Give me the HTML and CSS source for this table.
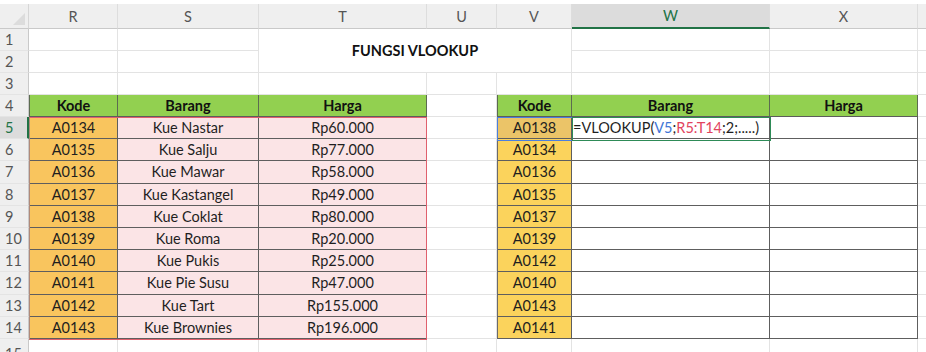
FILE: index.html
```html
<!DOCTYPE html>
<html lang="id">
<head>
<meta charset="utf-8">
<title>Fungsi VLOOKUP</title>
<link rel="stylesheet" href="styles.css">
</head>
<body>
<div class="sheet">
  <div class="grid">
    <!-- column headers -->
    <div class="corner"><span class="tri"></span></div>
    <div class="hc">R</div>
    <div class="hc">S</div>
    <div class="hc">T</div>
    <div class="hc">U</div>
    <div class="hc">V</div>
    <div class="hc active-col">W</div>
    <div class="hc">X</div>
    <div class="hc end"></div>

    <!-- row 1 -->
    <div class="rh">1</div>
    <div class="c"></div>
    <div class="c"></div>
    <div class="title">FUNGSI VLOOKUP</div>
    <div class="c"></div>
    <div class="c"></div>
    <div class="c end"></div>

    <!-- row 2 -->
    <div class="rh">2</div>
    <div class="c"></div>
    <div class="c"></div>
    <div class="c"></div>
    <div class="c"></div>
    <div class="c end"></div>

    <!-- row 3 -->
    <div class="rh">3</div>
    <div class="c"></div>
    <div class="c"></div>
    <div class="c"></div>
    <div class="c"></div>
    <div class="c"></div>
    <div class="c"></div>
    <div class="c"></div>
    <div class="c end"></div>

    <!-- row 4 -->
    <div class="rh">4</div>
    <div class="g first">Kode</div>
    <div class="g">Barang</div>
    <div class="g">Harga</div>
    <div class="c"></div>
    <div class="g first">Kode</div>
    <div class="g">Barang</div>
    <div class="g">Harga</div>
    <div class="c end"></div>

    <!-- row 5 -->
    <div class="rh active-row">5</div>
    <div class="o first">A0134</div>
    <div class="p">Kue Nastar</div>
    <div class="p">Rp60.000</div>
    <div class="c"></div>
    <div class="y first sel">A0138</div>
    <div class="w formula">=VLOOKUP(<span class="ref-b">V5</span>;<span class="ref-r">R5:T14</span>;2;.....)</div>
    <div class="w"></div>
    <div class="c end"></div>

    <!-- row 6 -->
    <div class="rh">6</div>
    <div class="o first">A0135</div>
    <div class="p">Kue Salju</div>
    <div class="p">Rp77.000</div>
    <div class="c"></div>
    <div class="y first">A0134</div>
    <div class="w"></div>
    <div class="w"></div>
    <div class="c end"></div>

    <!-- row 7 -->
    <div class="rh">7</div>
    <div class="o first">A0136</div>
    <div class="p">Kue Mawar</div>
    <div class="p">Rp58.000</div>
    <div class="c"></div>
    <div class="y first">A0136</div>
    <div class="w"></div>
    <div class="w"></div>
    <div class="c end"></div>

    <!-- row 8 -->
    <div class="rh">8</div>
    <div class="o first">A0137</div>
    <div class="p">Kue Kastangel</div>
    <div class="p">Rp49.000</div>
    <div class="c"></div>
    <div class="y first">A0135</div>
    <div class="w"></div>
    <div class="w"></div>
    <div class="c end"></div>

    <!-- row 9 -->
    <div class="rh">9</div>
    <div class="o first">A0138</div>
    <div class="p">Kue Coklat</div>
    <div class="p">Rp80.000</div>
    <div class="c"></div>
    <div class="y first">A0137</div>
    <div class="w"></div>
    <div class="w"></div>
    <div class="c end"></div>

    <!-- row 10 -->
    <div class="rh">10</div>
    <div class="o first">A0139</div>
    <div class="p">Kue Roma</div>
    <div class="p">Rp20.000</div>
    <div class="c"></div>
    <div class="y first">A0139</div>
    <div class="w"></div>
    <div class="w"></div>
    <div class="c end"></div>

    <!-- row 11 -->
    <div class="rh">11</div>
    <div class="o first">A0140</div>
    <div class="p">Kue Pukis</div>
    <div class="p">Rp25.000</div>
    <div class="c"></div>
    <div class="y first">A0142</div>
    <div class="w"></div>
    <div class="w"></div>
    <div class="c end"></div>

    <!-- row 12 -->
    <div class="rh">12</div>
    <div class="o first">A0141</div>
    <div class="p">Kue Pie Susu</div>
    <div class="p">Rp47.000</div>
    <div class="c"></div>
    <div class="y first">A0140</div>
    <div class="w"></div>
    <div class="w"></div>
    <div class="c end"></div>

    <!-- row 13 -->
    <div class="rh">13</div>
    <div class="o first">A0142</div>
    <div class="p">Kue Tart</div>
    <div class="p">Rp155.000</div>
    <div class="c"></div>
    <div class="y first">A0143</div>
    <div class="w"></div>
    <div class="w"></div>
    <div class="c end"></div>

    <!-- row 14 -->
    <div class="rh">14</div>
    <div class="o first">A0143</div>
    <div class="p">Kue Brownies</div>
    <div class="p">Rp196.000</div>
    <div class="c"></div>
    <div class="y first">A0141</div>
    <div class="w"></div>
    <div class="w"></div>
    <div class="c end"></div>

    <!-- row 15 -->
    <div class="rh">15</div>
    <div class="c"></div>
    <div class="c"></div>
    <div class="c"></div>
    <div class="c"></div>
    <div class="c"></div>
    <div class="c"></div>
    <div class="c"></div>
    <div class="c end"></div>
  </div>

  <div class="range-red"></div>
  <div class="range-blue"></div>
  <div class="active-cell"></div>
</div>
</body>
</html>
```

FILE: styles.css
```css
* { box-sizing: border-box; }

html, body {
  margin: 0;
  padding: 0;
  background: #ffffff;
}

body {
  font-family: "Lato", "Liberation Sans", sans-serif;
  font-size: 14.5px;
  color: #1f1f1f;
  width: 926px;
  height: 352px;
  overflow: hidden;
}

.sheet {
  position: relative;
  padding-top: 4px;
  width: 926px;
  height: 352px;
}

.grid {
  display: grid;
  grid-template-columns: 29px 89px 141px 168px 70px 75px 198px 148px 8px;
  grid-template-rows: 25px repeat(4, 22px) repeat(10, 22.2px) 30px;
}

.grid > div {
  display: flex;
  align-items: center;
  justify-content: center;
  white-space: nowrap;
  overflow: hidden;
}

.corner {
  background: #efefef;
  border-right: 1px solid #d6d6d6;
  border-bottom: 1px solid #c9c9c9;
  position: relative;
}
.tri {
  position: absolute;
  right: 3px;
  bottom: 3px;
  width: 0;
  height: 0;
  border-left: 12px solid transparent;
  border-bottom: 12px solid #dcdcdc;
}

.hc {
  background: #efefef;
  color: #555555;
  border-right: 1px solid #dddddd;
  border-bottom: 1px solid #c9c9c9;
  font-size: 14.5px;
}
.hc.active-col {
  background: #dcdcdc;
  color: #217346;
  border-bottom: 2px solid #217346;
}
.hc.end {
  border-right: none;
}

.rh {
  background: #efefef;
  color: #555555;
  border-right: 1px solid #c9c9c9;
  border-bottom: 1px solid #e4e4e4;
  justify-content: flex-start !important;
  padding-left: 5px;
  font-size: 14.5px;
}
.rh.active-row {
  background: #dcdcdc;
  color: #217346;
  border-right: 2px solid #217346;
}

.c {
  border-right: 1px solid #e3e3e3;
  border-bottom: 1px solid #e3e3e3;
}
.c.end {
  border-right: none;
}

.title {
  grid-column: 4 / 7;
  grid-row: 2 / 4;
  font-weight: 700;
  color: #111111;
  border-right: 1px solid #e3e3e3;
  border-bottom: 1px solid #e3e3e3;
}

.g {
  background: #92d050;
  font-weight: 700;
  color: #111111;
  border-right: 1px solid #5c6b50;
  border-bottom: 1px solid #5c5c5c;
}
.g.first { border-left: 1px solid #5c6b50; }

.o {
  background: #f9c55e;
  border-right: 1px solid #5e5e5e;
  border-bottom: 1px solid #5e5e5e;
}
.o.first { border-left: 1px solid #5e5e5e; }

.p {
  background: #fbe4e6;
  border-right: 1px solid #5e5e5e;
  border-bottom: 1px solid #5e5e5e;
}

.y {
  background: #fbd35c;
  border-right: 1px solid #5e5e5e;
  border-bottom: 1px solid #5e5e5e;
}
.y.first { border-left: 1px solid #6a6a6a; }
.y.sel { background: #ebc468; }

.w {
  background: #ffffff;
  border-right: 1px solid #5e5e5e;
  border-bottom: 1px solid #5e5e5e;
}

.formula {
  justify-content: flex-start !important;
  padding-left: 1px;
  overflow: visible !important;
}
.ref-b { color: #3f76d6; }
.ref-r { color: #e2445e; }

.range-red {
  position: absolute;
  left: 29px;
  top: 117px;
  width: 398px;
  height: 223px;
  border: 1px solid #e0606e;
  border-left-color: #b08a7a;
  pointer-events: none;
}

.range-blue {
  position: absolute;
  left: 497px;
  top: 117px;
  width: 76px;
  height: 24px;
  border: 1px solid #4a7fe0;
  pointer-events: none;
}

.active-cell {
  position: absolute;
  left: 572px;
  top: 117px;
  width: 199px;
  height: 24px;
  border: 1px solid #2e8b57;
  pointer-events: none;
}
```
